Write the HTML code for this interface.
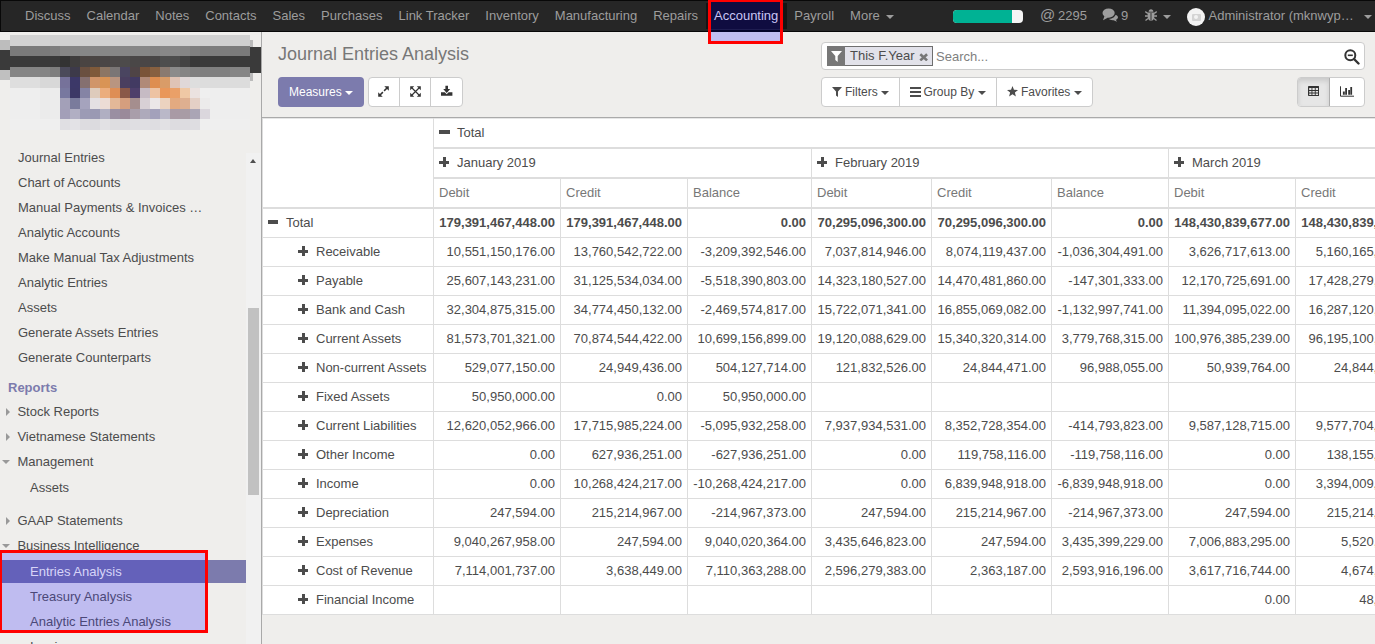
<!DOCTYPE html><html><head><meta charset="utf-8"><style>
*{box-sizing:border-box;margin:0;padding:0}
html,body{width:1375px;height:644px;overflow:hidden;background:#efeeec;font-family:"Liberation Sans", sans-serif;font-size:13px;color:#4c4c4c}
.abs{position:absolute}
.nav{position:absolute;left:0;top:0;width:1377px;height:32px;background:#262626;border:1px solid #080808}
.nav a{position:absolute;top:8px;color:#9d9d9d;font-size:13px;line-height:15px;white-space:nowrap}
.sb{position:absolute;left:0;top:32px;width:262px;height:612px;background:#efeeec;border-right:1px solid #a9a9a9}
.mi{position:absolute;white-space:nowrap;line-height:15px}
.cell{position:absolute;white-space:nowrap;line-height:18px}
.hl{position:absolute;background:#dddddd}
</style></head><body><div class="nav"></div><a style="position:absolute;left:25px;top:8px;color:#9d9d9d;line-height:15px;white-space:nowrap">Discuss</a><a style="position:absolute;left:86.52px;top:8px;color:#9d9d9d;line-height:15px;white-space:nowrap">Calendar</a><a style="position:absolute;left:155.29px;top:8px;color:#9d9d9d;line-height:15px;white-space:nowrap">Notes</a><a style="position:absolute;left:205.26px;top:8px;color:#9d9d9d;line-height:15px;white-space:nowrap">Contacts</a><a style="position:absolute;left:272.57px;top:8px;color:#9d9d9d;line-height:15px;white-space:nowrap">Sales</a><a style="position:absolute;left:321.1px;top:8px;color:#9d9d9d;line-height:15px;white-space:nowrap">Purchases</a><a style="position:absolute;left:398.52px;top:8px;color:#9d9d9d;line-height:15px;white-space:nowrap">Link Tracker</a><a style="position:absolute;left:485.33px;top:8px;color:#9d9d9d;line-height:15px;white-space:nowrap">Inventory</a><a style="position:absolute;left:554.81px;top:8px;color:#9d9d9d;line-height:15px;white-space:nowrap">Manufacturing</a><a style="position:absolute;left:653.2px;top:8px;color:#9d9d9d;line-height:15px;white-space:nowrap">Repairs</a><a style="position:absolute;left:794.33px;top:8px;color:#9d9d9d;line-height:15px;white-space:nowrap">Payroll</a><a style="position:absolute;left:850.08px;top:8px;color:#9d9d9d;line-height:15px;white-space:nowrap">More</a><span style="position:absolute;left:886px;top:15px;width:0;height:0;border-left:4px solid transparent;border-right:4px solid transparent;border-top:4px solid #9d9d9d"></span><div class="abs" style="left:953px;top:10px;width:70px;height:13px;background:#f5f5f5;border-radius:4px;overflow:hidden"><div style="width:59px;height:13px;background:#00b294"></div></div><span class="abs" style="left:1040px;top:6px;color:#9d9d9d;font-size:15px;line-height:18px">@</span><span class="abs" style="left:1058px;top:8px;color:#9d9d9d;line-height:15px">2295</span><svg class="abs" style="left:1102px;top:8px" width="17" height="14" viewBox="0 0 17 14"><path d="M9.5 6.5 C13.5 6 16 7.5 16 9.2 C16 10.4 15 11.3 13.8 11.8 L15 13.8 L11.6 12.3 C9 12.5 6.5 11.4 6.2 9.6Z" fill="#9d9d9d"/><ellipse cx="6.8" cy="5.3" rx="7.2" ry="5.6" fill="#262626"/><ellipse cx="6.6" cy="5.1" rx="6.1" ry="4.6" fill="#9d9d9d"/><path d="M2.5 8 L1 12.2 L6.2 9.6Z" fill="#9d9d9d"/></svg><span class="abs" style="left:1121px;top:8px;color:#9d9d9d;line-height:15px">9</span><svg class="abs" style="left:1145px;top:9px" width="12" height="12" viewBox="0 0 12 12"><path d="M3.6 2.8 C3.6 1.2 4.6 0.2 6 0.2 C7.4 0.2 8.4 1.2 8.4 2.8Z" fill="#9d9d9d"/><path d="M2.6 3.4 H9.4 V7.5 C9.4 10 8 11.8 6 11.8 C4 11.8 2.6 10 2.6 7.5Z" fill="#9d9d9d"/><path d="M6 4V11.5" stroke="#262626" stroke-width="0.9"/><path d="M0.3 2.6 L2.8 4.6 M11.7 2.6 L9.2 4.6 M0 7 H2.8 M12 7 H9.2 M0.5 11.4 L3 9.4 M11.5 11.4 L9 9.4" stroke="#9d9d9d" stroke-width="1.3"/></svg><span style="position:absolute;left:1163px;top:15px;width:0;height:0;border-left:4px solid transparent;border-right:4px solid transparent;border-top:4px solid #9d9d9d"></span><div class="abs" style="left:1187px;top:8px;width:18px;height:18px;border-radius:50%;background:#f3f3f3"><div style="position:absolute;left:4.5px;top:6px;width:9px;height:6.5px;background:#d4d4d4;border-radius:1px"></div><div style="position:absolute;left:7px;top:7.2px;width:4px;height:4px;background:#f3f3f3;border-radius:50%"></div></div><span class="abs" style="left:1208.5px;top:8px;color:#9d9d9d;line-height:15px;white-space:nowrap">Administrator (mknwyp…</span><span style="position:absolute;left:1364px;top:15px;width:0;height:0;border-left:4px solid transparent;border-right:4px solid transparent;border-top:4px solid #9d9d9d"></span><div class="abs" style="left:706px;top:3px;width:81px;height:26px;background:#151515"></div><div class="abs" style="left:708px;top:0;width:75px;height:44px;border:3px solid #ff0000"></div><div class="abs" style="left:711px;top:2px;width:69px;height:27px;background:#0f0c40"></div><div class="abs" style="left:711px;top:29px;width:69px;height:1px;background:#1e1c50"></div><div class="abs" style="left:711px;top:30px;width:69px;height:2px;background:#03022a"></div><div class="abs" style="left:711px;top:32px;width:69px;height:9px;background:#c0bdf0"></div><a class="abs" style="left:714px;top:8px;color:#c9c5f5;line-height:15px">Accounting</a><div class="sb"></div><div style="position:absolute;left:0;top:0;width:262px;height:145px;overflow:hidden"><div style="position:absolute;left:0;top:40px;width:10px;height:10px;background:#bdbdbd"></div><div style="position:absolute;left:0;top:50px;width:10px;height:20px;background:#3a3a3a"></div><div style="position:absolute;left:0;top:70px;width:10px;height:10px;background:#c0c0c0"></div><div style="position:absolute;left:250px;top:40px;width:3px;height:10px;background:#bbbbbb"></div><div style="position:absolute;left:250px;top:71px;width:3px;height:10px;background:#bbbbbb"></div><div style="position:absolute;left:250px;top:47px;width:11px;height:26px;background:#3a3a3a"></div><div style="position:absolute;left:10px;top:35px;width:10px;height:11px;background:#d2d2d2"></div><div style="position:absolute;left:20px;top:35px;width:10px;height:11px;background:#d2d2d2"></div><div style="position:absolute;left:30px;top:35px;width:10px;height:11px;background:#d2d2d2"></div><div style="position:absolute;left:40px;top:35px;width:10px;height:11px;background:#d2d2d2"></div><div style="position:absolute;left:50px;top:35px;width:10px;height:11px;background:#d0d0d0"></div><div style="position:absolute;left:60px;top:35px;width:10px;height:11px;background:#d0d0d0"></div><div style="position:absolute;left:70px;top:35px;width:10px;height:11px;background:#d0d0d0"></div><div style="position:absolute;left:80px;top:35px;width:10px;height:11px;background:#d0d0d0"></div><div style="position:absolute;left:90px;top:35px;width:10px;height:11px;background:#d0d0d0"></div><div style="position:absolute;left:100px;top:35px;width:10px;height:11px;background:#d0d0d0"></div><div style="position:absolute;left:110px;top:35px;width:10px;height:11px;background:#d0d0d0"></div><div style="position:absolute;left:120px;top:35px;width:10px;height:11px;background:#d0d0d0"></div><div style="position:absolute;left:130px;top:35px;width:10px;height:11px;background:#d0d0d0"></div><div style="position:absolute;left:140px;top:35px;width:10px;height:11px;background:#d0d0d0"></div><div style="position:absolute;left:150px;top:35px;width:10px;height:11px;background:#d0d0d0"></div><div style="position:absolute;left:160px;top:35px;width:10px;height:11px;background:#d0d0d0"></div><div style="position:absolute;left:170px;top:35px;width:10px;height:11px;background:#d0d0d0"></div><div style="position:absolute;left:180px;top:35px;width:10px;height:11px;background:#d0d0d0"></div><div style="position:absolute;left:190px;top:35px;width:10px;height:11px;background:#d0d0d0"></div><div style="position:absolute;left:200px;top:35px;width:10px;height:11px;background:#d0d0d0"></div><div style="position:absolute;left:210px;top:35px;width:10px;height:11px;background:#d0d0d0"></div><div style="position:absolute;left:220px;top:35px;width:10px;height:11px;background:#d0d0d0"></div><div style="position:absolute;left:230px;top:35px;width:10px;height:11px;background:#d0d0d0"></div><div style="position:absolute;left:240px;top:35px;width:10px;height:11px;background:#d0d0d0"></div><div style="position:absolute;left:10px;top:46px;width:10px;height:10px;background:#7a7a7a"></div><div style="position:absolute;left:20px;top:46px;width:10px;height:10px;background:#7a7a7a"></div><div style="position:absolute;left:30px;top:46px;width:10px;height:10px;background:#7a7a7a"></div><div style="position:absolute;left:40px;top:46px;width:10px;height:10px;background:#7a7a7a"></div><div style="position:absolute;left:50px;top:46px;width:10px;height:10px;background:#7e7e7e"></div><div style="position:absolute;left:60px;top:46px;width:10px;height:10px;background:#858585"></div><div style="position:absolute;left:70px;top:46px;width:10px;height:10px;background:#858585"></div><div style="position:absolute;left:80px;top:46px;width:10px;height:10px;background:#878787"></div><div style="position:absolute;left:90px;top:46px;width:10px;height:10px;background:#878787"></div><div style="position:absolute;left:100px;top:46px;width:10px;height:10px;background:#878787"></div><div style="position:absolute;left:110px;top:46px;width:10px;height:10px;background:#878787"></div><div style="position:absolute;left:120px;top:46px;width:10px;height:10px;background:#878787"></div><div style="position:absolute;left:130px;top:46px;width:10px;height:10px;background:#878787"></div><div style="position:absolute;left:140px;top:46px;width:10px;height:10px;background:#878787"></div><div style="position:absolute;left:150px;top:46px;width:10px;height:10px;background:#838383"></div><div style="position:absolute;left:160px;top:46px;width:10px;height:10px;background:#888888"></div><div style="position:absolute;left:170px;top:46px;width:10px;height:10px;background:#888888"></div><div style="position:absolute;left:180px;top:46px;width:10px;height:10px;background:#858585"></div><div style="position:absolute;left:190px;top:46px;width:10px;height:10px;background:#7f7f7f"></div><div style="position:absolute;left:200px;top:46px;width:10px;height:10px;background:#7c7c7c"></div><div style="position:absolute;left:210px;top:46px;width:10px;height:10px;background:#7d7d7d"></div><div style="position:absolute;left:220px;top:46px;width:10px;height:10px;background:#7d7d7d"></div><div style="position:absolute;left:230px;top:46px;width:10px;height:10px;background:#7b7b7b"></div><div style="position:absolute;left:240px;top:46px;width:10px;height:10px;background:#7a7a7a"></div><div style="position:absolute;left:10px;top:56px;width:10px;height:11px;background:#3a3a3a"></div><div style="position:absolute;left:20px;top:56px;width:10px;height:11px;background:#3a3a3a"></div><div style="position:absolute;left:30px;top:56px;width:10px;height:11px;background:#3a3a3a"></div><div style="position:absolute;left:40px;top:56px;width:10px;height:11px;background:#3a3a3a"></div><div style="position:absolute;left:50px;top:56px;width:10px;height:11px;background:#3a3a3a"></div><div style="position:absolute;left:60px;top:56px;width:10px;height:11px;background:#333333"></div><div style="position:absolute;left:70px;top:56px;width:10px;height:11px;background:#3f3d3d"></div><div style="position:absolute;left:80px;top:56px;width:10px;height:11px;background:#4a4442"></div><div style="position:absolute;left:90px;top:56px;width:10px;height:11px;background:#4a4543"></div><div style="position:absolute;left:100px;top:56px;width:10px;height:11px;background:#4a4646"></div><div style="position:absolute;left:110px;top:56px;width:10px;height:11px;background:#4c4949"></div><div style="position:absolute;left:120px;top:56px;width:10px;height:11px;background:#4d4b4b"></div><div style="position:absolute;left:130px;top:56px;width:10px;height:11px;background:#4a4747"></div><div style="position:absolute;left:140px;top:56px;width:10px;height:11px;background:#4a4646"></div><div style="position:absolute;left:150px;top:56px;width:10px;height:11px;background:#474545"></div><div style="position:absolute;left:160px;top:56px;width:10px;height:11px;background:#4e4e4e"></div><div style="position:absolute;left:170px;top:56px;width:10px;height:11px;background:#4d4d4d"></div><div style="position:absolute;left:180px;top:56px;width:10px;height:11px;background:#444444"></div><div style="position:absolute;left:190px;top:56px;width:10px;height:11px;background:#383838"></div><div style="position:absolute;left:200px;top:56px;width:10px;height:11px;background:#3a3a3a"></div><div style="position:absolute;left:210px;top:56px;width:10px;height:11px;background:#3a3a3a"></div><div style="position:absolute;left:220px;top:56px;width:10px;height:11px;background:#3a3a3a"></div><div style="position:absolute;left:230px;top:56px;width:10px;height:11px;background:#3a3a3a"></div><div style="position:absolute;left:240px;top:56px;width:10px;height:11px;background:#3a3a3a"></div><div style="position:absolute;left:10px;top:67px;width:10px;height:10px;background:#858585"></div><div style="position:absolute;left:20px;top:67px;width:10px;height:10px;background:#858585"></div><div style="position:absolute;left:30px;top:67px;width:10px;height:10px;background:#858585"></div><div style="position:absolute;left:40px;top:67px;width:10px;height:10px;background:#858585"></div><div style="position:absolute;left:50px;top:67px;width:10px;height:10px;background:#7e7e7e"></div><div style="position:absolute;left:60px;top:67px;width:10px;height:10px;background:#4b4a5a"></div><div style="position:absolute;left:70px;top:67px;width:10px;height:10px;background:#3d3a4a"></div><div style="position:absolute;left:80px;top:67px;width:10px;height:10px;background:#6a5040"></div><div style="position:absolute;left:90px;top:67px;width:10px;height:10px;background:#7f5a3a"></div><div style="position:absolute;left:100px;top:67px;width:10px;height:10px;background:#8c7664"></div><div style="position:absolute;left:110px;top:67px;width:10px;height:10px;background:#7a7676"></div><div style="position:absolute;left:120px;top:67px;width:10px;height:10px;background:#4a4560"></div><div style="position:absolute;left:130px;top:67px;width:10px;height:10px;background:#4f4446"></div><div style="position:absolute;left:140px;top:67px;width:10px;height:10px;background:#7a5438"></div><div style="position:absolute;left:150px;top:67px;width:10px;height:10px;background:#876040"></div><div style="position:absolute;left:160px;top:67px;width:10px;height:10px;background:#8a7a70"></div><div style="position:absolute;left:170px;top:67px;width:10px;height:10px;background:#8b8b8b"></div><div style="position:absolute;left:180px;top:67px;width:10px;height:10px;background:#858585"></div><div style="position:absolute;left:190px;top:67px;width:10px;height:10px;background:#808080"></div><div style="position:absolute;left:200px;top:67px;width:10px;height:10px;background:#7f7f7f"></div><div style="position:absolute;left:210px;top:67px;width:10px;height:10px;background:#808080"></div><div style="position:absolute;left:220px;top:67px;width:10px;height:10px;background:#808080"></div><div style="position:absolute;left:230px;top:67px;width:10px;height:10px;background:#858585"></div><div style="position:absolute;left:240px;top:67px;width:10px;height:10px;background:#858585"></div><div style="position:absolute;left:10px;top:77px;width:10px;height:11px;background:#dedede"></div><div style="position:absolute;left:20px;top:77px;width:10px;height:11px;background:#dedede"></div><div style="position:absolute;left:30px;top:77px;width:10px;height:11px;background:#dedede"></div><div style="position:absolute;left:40px;top:77px;width:10px;height:11px;background:#d8d8d8"></div><div style="position:absolute;left:50px;top:77px;width:10px;height:11px;background:#d8d8d8"></div><div style="position:absolute;left:60px;top:77px;width:10px;height:11px;background:#76729a"></div><div style="position:absolute;left:70px;top:77px;width:10px;height:11px;background:#3c3868"></div><div style="position:absolute;left:80px;top:77px;width:10px;height:11px;background:#857070"></div><div style="position:absolute;left:90px;top:77px;width:10px;height:11px;background:#d0956a"></div><div style="position:absolute;left:100px;top:77px;width:10px;height:11px;background:#d99455"></div><div style="position:absolute;left:110px;top:77px;width:10px;height:11px;background:#b99580"></div><div style="position:absolute;left:120px;top:77px;width:10px;height:11px;background:#4a3f5f"></div><div style="position:absolute;left:130px;top:77px;width:10px;height:11px;background:#423a62"></div><div style="position:absolute;left:140px;top:77px;width:10px;height:11px;background:#b08a78"></div><div style="position:absolute;left:150px;top:77px;width:10px;height:11px;background:#de8e50"></div><div style="position:absolute;left:160px;top:77px;width:10px;height:11px;background:#d99c68"></div><div style="position:absolute;left:170px;top:77px;width:10px;height:11px;background:#dfc3b5"></div><div style="position:absolute;left:180px;top:77px;width:10px;height:11px;background:#e0d8d8"></div><div style="position:absolute;left:190px;top:77px;width:10px;height:11px;background:#dedede"></div><div style="position:absolute;left:200px;top:77px;width:10px;height:11px;background:#dddddd"></div><div style="position:absolute;left:210px;top:77px;width:10px;height:11px;background:#dcdcdc"></div><div style="position:absolute;left:220px;top:77px;width:10px;height:11px;background:#dcdcdc"></div><div style="position:absolute;left:230px;top:77px;width:10px;height:11px;background:#dcdcdc"></div><div style="position:absolute;left:240px;top:77px;width:10px;height:11px;background:#dcdcdc"></div><div style="position:absolute;left:10px;top:88px;width:10px;height:10px;background:#eeeeee"></div><div style="position:absolute;left:20px;top:88px;width:10px;height:10px;background:#eeeeee"></div><div style="position:absolute;left:30px;top:88px;width:10px;height:10px;background:#eeeeee"></div><div style="position:absolute;left:40px;top:88px;width:10px;height:10px;background:#ebebeb"></div><div style="position:absolute;left:50px;top:88px;width:10px;height:10px;background:#ececec"></div><div style="position:absolute;left:60px;top:88px;width:10px;height:10px;background:#78789f"></div><div style="position:absolute;left:70px;top:88px;width:10px;height:10px;background:#3c3866"></div><div style="position:absolute;left:80px;top:88px;width:10px;height:10px;background:#8584a5"></div><div style="position:absolute;left:90px;top:88px;width:10px;height:10px;background:#decbbc"></div><div style="position:absolute;left:100px;top:88px;width:10px;height:10px;background:#ebad7d"></div><div style="position:absolute;left:110px;top:88px;width:10px;height:10px;background:#de8e55"></div><div style="position:absolute;left:120px;top:88px;width:10px;height:10px;background:#8a5848"></div><div style="position:absolute;left:130px;top:88px;width:10px;height:10px;background:#4e3f6a"></div><div style="position:absolute;left:140px;top:88px;width:10px;height:10px;background:#c6bbc4"></div><div style="position:absolute;left:150px;top:88px;width:10px;height:10px;background:#edc3a3"></div><div style="position:absolute;left:160px;top:88px;width:10px;height:10px;background:#e9975a"></div><div style="position:absolute;left:170px;top:88px;width:10px;height:10px;background:#eaa068"></div><div style="position:absolute;left:180px;top:88px;width:10px;height:10px;background:#efc8a5"></div><div style="position:absolute;left:190px;top:88px;width:10px;height:10px;background:#ebe2e0"></div><div style="position:absolute;left:200px;top:88px;width:10px;height:10px;background:#efefef"></div><div style="position:absolute;left:210px;top:88px;width:10px;height:10px;background:#eeeeee"></div><div style="position:absolute;left:220px;top:88px;width:10px;height:10px;background:#eeeeee"></div><div style="position:absolute;left:230px;top:88px;width:10px;height:10px;background:#eeeeee"></div><div style="position:absolute;left:240px;top:88px;width:10px;height:10px;background:#eeeeee"></div><div style="position:absolute;left:10px;top:98px;width:10px;height:11px;background:#eeeeee"></div><div style="position:absolute;left:20px;top:98px;width:10px;height:11px;background:#eeeeee"></div><div style="position:absolute;left:30px;top:98px;width:10px;height:11px;background:#eeeeee"></div><div style="position:absolute;left:40px;top:98px;width:10px;height:11px;background:#ebebeb"></div><div style="position:absolute;left:50px;top:98px;width:10px;height:11px;background:#ececec"></div><div style="position:absolute;left:60px;top:98px;width:10px;height:11px;background:#a3a0b8"></div><div style="position:absolute;left:70px;top:98px;width:10px;height:11px;background:#7a7b9c"></div><div style="position:absolute;left:80px;top:98px;width:10px;height:11px;background:#a5a3bd"></div><div style="position:absolute;left:90px;top:98px;width:10px;height:11px;background:#e4e0e3"></div><div style="position:absolute;left:100px;top:98px;width:10px;height:11px;background:#ecdcd5"></div><div style="position:absolute;left:110px;top:98px;width:10px;height:11px;background:#e3b898"></div><div style="position:absolute;left:120px;top:98px;width:10px;height:11px;background:#d59e7e"></div><div style="position:absolute;left:130px;top:98px;width:10px;height:11px;background:#a58e8e"></div><div style="position:absolute;left:140px;top:98px;width:10px;height:11px;background:#d8d0d5"></div><div style="position:absolute;left:150px;top:98px;width:10px;height:11px;background:#ebe7e8"></div><div style="position:absolute;left:160px;top:98px;width:10px;height:11px;background:#ecd3c0"></div><div style="position:absolute;left:170px;top:98px;width:10px;height:11px;background:#e3aa80"></div><div style="position:absolute;left:180px;top:98px;width:10px;height:11px;background:#deaf90"></div><div style="position:absolute;left:190px;top:98px;width:10px;height:11px;background:#e4d0c6"></div><div style="position:absolute;left:200px;top:98px;width:10px;height:11px;background:#ecebeb"></div><div style="position:absolute;left:210px;top:98px;width:10px;height:11px;background:#eeeeee"></div><div style="position:absolute;left:220px;top:98px;width:10px;height:11px;background:#eeeeee"></div><div style="position:absolute;left:230px;top:98px;width:10px;height:11px;background:#eeeeee"></div><div style="position:absolute;left:240px;top:98px;width:10px;height:11px;background:#eeeeee"></div><div style="position:absolute;left:10px;top:109px;width:10px;height:10px;background:#eeeeee"></div><div style="position:absolute;left:20px;top:109px;width:10px;height:10px;background:#eeeeee"></div><div style="position:absolute;left:30px;top:109px;width:10px;height:10px;background:#eeeeee"></div><div style="position:absolute;left:40px;top:109px;width:10px;height:10px;background:#ebebeb"></div><div style="position:absolute;left:50px;top:109px;width:10px;height:10px;background:#ececec"></div><div style="position:absolute;left:60px;top:109px;width:10px;height:10px;background:#a39fb8"></div><div style="position:absolute;left:70px;top:109px;width:10px;height:10px;background:#b1afc3"></div><div style="position:absolute;left:80px;top:109px;width:10px;height:10px;background:#9c9bb5"></div><div style="position:absolute;left:90px;top:109px;width:10px;height:10px;background:#9a99b3"></div><div style="position:absolute;left:100px;top:109px;width:10px;height:10px;background:#b0afc2"></div><div style="position:absolute;left:110px;top:109px;width:10px;height:10px;background:#9a8fa2"></div><div style="position:absolute;left:120px;top:109px;width:10px;height:10px;background:#9a8a9a"></div><div style="position:absolute;left:130px;top:109px;width:10px;height:10px;background:#a99eaa"></div><div style="position:absolute;left:140px;top:109px;width:10px;height:10px;background:#aeaabb"></div><div style="position:absolute;left:150px;top:109px;width:10px;height:10px;background:#a3a1bb"></div><div style="position:absolute;left:160px;top:109px;width:10px;height:10px;background:#bab8c8"></div><div style="position:absolute;left:170px;top:109px;width:10px;height:10px;background:#a99aa5"></div><div style="position:absolute;left:180px;top:109px;width:10px;height:10px;background:#a89ca5"></div><div style="position:absolute;left:190px;top:109px;width:10px;height:10px;background:#aaa5b5"></div><div style="position:absolute;left:200px;top:109px;width:10px;height:10px;background:#dbd7dd"></div><div style="position:absolute;left:210px;top:109px;width:10px;height:10px;background:#eeeeee"></div><div style="position:absolute;left:220px;top:109px;width:10px;height:10px;background:#eeeeee"></div><div style="position:absolute;left:230px;top:109px;width:10px;height:10px;background:#eeeeee"></div><div style="position:absolute;left:240px;top:109px;width:10px;height:10px;background:#eeeeee"></div><div style="position:absolute;left:10px;top:119px;width:10px;height:11px;background:#efefef"></div><div style="position:absolute;left:20px;top:119px;width:10px;height:11px;background:#efefef"></div><div style="position:absolute;left:30px;top:119px;width:10px;height:11px;background:#efefef"></div><div style="position:absolute;left:40px;top:119px;width:10px;height:11px;background:#efefef"></div><div style="position:absolute;left:50px;top:119px;width:10px;height:11px;background:#efefef"></div><div style="position:absolute;left:60px;top:119px;width:10px;height:11px;background:#e0dfe3"></div><div style="position:absolute;left:70px;top:119px;width:10px;height:11px;background:#e3e2e6"></div><div style="position:absolute;left:80px;top:119px;width:10px;height:11px;background:#dddce0"></div><div style="position:absolute;left:90px;top:119px;width:10px;height:11px;background:#dcdbdf"></div><div style="position:absolute;left:100px;top:119px;width:10px;height:11px;background:#e2e1e4"></div><div style="position:absolute;left:110px;top:119px;width:10px;height:11px;background:#dedde0"></div><div style="position:absolute;left:120px;top:119px;width:10px;height:11px;background:#dddce0"></div><div style="position:absolute;left:130px;top:119px;width:10px;height:11px;background:#dfdee2"></div><div style="position:absolute;left:140px;top:119px;width:10px;height:11px;background:#e0dfe3"></div><div style="position:absolute;left:150px;top:119px;width:10px;height:11px;background:#dedde1"></div><div style="position:absolute;left:160px;top:119px;width:10px;height:11px;background:#e2e1e4"></div><div style="position:absolute;left:170px;top:119px;width:10px;height:11px;background:#dddce0"></div><div style="position:absolute;left:180px;top:119px;width:10px;height:11px;background:#dddce0"></div><div style="position:absolute;left:190px;top:119px;width:10px;height:11px;background:#dedde1"></div><div style="position:absolute;left:200px;top:119px;width:10px;height:11px;background:#efefef"></div><div style="position:absolute;left:210px;top:119px;width:10px;height:11px;background:#efefef"></div><div style="position:absolute;left:220px;top:119px;width:10px;height:11px;background:#efefef"></div><div style="position:absolute;left:230px;top:119px;width:10px;height:11px;background:#efefef"></div><div style="position:absolute;left:240px;top:119px;width:10px;height:11px;background:#efefef"></div></div><div class="abs" style="left:246px;top:153px;width:15px;height:491px;background:#f1f1f1"></div><div class="abs" style="left:248px;top:308px;width:11px;height:187px;background:#c1c1c1"></div><span class="abs" style="left:249.6px;top:158.6px;width:0;height:0;border-left:3.8px solid transparent;border-right:3.8px solid transparent;border-bottom:4px solid #505050"></span><div class="mi" style="left:18px;top:150px">Journal Entries</div><div class="mi" style="left:18px;top:175px">Chart of Accounts</div><div class="mi" style="left:18px;top:200px">Manual Payments &amp; Invoices …</div><div class="mi" style="left:18px;top:225px">Analytic Accounts</div><div class="mi" style="left:18px;top:250px">Make Manual Tax Adjustments</div><div class="mi" style="left:18px;top:275px">Analytic Entries</div><div class="mi" style="left:18px;top:300px">Assets</div><div class="mi" style="left:18px;top:325px">Generate Assets Entries</div><div class="mi" style="left:18px;top:350px">Generate Counterparts</div><div class="mi" style="left:17.4px;top:404px">Stock Reports</div><div class="mi" style="left:17.4px;top:429px">Vietnamese Statements</div><div class="mi" style="left:17.4px;top:454px">Management</div><div class="mi" style="left:30px;top:480px">Assets</div><div class="mi" style="left:17.4px;top:513px">GAAP Statements</div><div class="mi" style="left:17.4px;top:538px">Business Intelligence</div><div class="mi" style="left:30px;top:589px">Treasury Analysis</div><div class="mi" style="left:30px;top:614px">Analytic Entries Analysis</div><div class="mi" style="left:30px;top:639px">Invoices</div><div class="mi" style="left:8px;top:380px;color:#7c7bad;font-weight:bold">Reports</div><span class="abs" style="left:6px;top:408px;width:0;height:0;border-top:4px solid transparent;border-bottom:4px solid transparent;border-left:4px solid #999"></span><span class="abs" style="left:6px;top:433px;width:0;height:0;border-top:4px solid transparent;border-bottom:4px solid transparent;border-left:4px solid #999"></span><span class="abs" style="left:2px;top:460px;width:0;height:0;border-left:4px solid transparent;border-right:4px solid transparent;border-top:4px solid #999"></span><span class="abs" style="left:6px;top:517px;width:0;height:0;border-top:4px solid transparent;border-bottom:4px solid transparent;border-left:4px solid #999"></span><span class="abs" style="left:2px;top:544px;width:0;height:0;border-left:4px solid transparent;border-right:4px solid transparent;border-top:4px solid #999"></span><div class="abs" style="left:0;top:560px;width:246px;height:23px;background:#7c7bad"></div><div class="abs" style="left:-1px;top:550px;width:209px;height:83px;border:3px solid #ff0000"></div><div class="abs" style="left:2px;top:553px;width:203px;height:77px;background:#bfbcf0"></div><div class="abs" style="left:2px;top:560px;width:203px;height:23px;background:#6461ba"></div><div class="mi" style="left:30px;top:564px;color:#d7d5f8">Entries Analysis</div><div class="mi" style="left:30px;top:589px;color:#4b4878">Treasury Analysis</div><div class="mi" style="left:30px;top:614px;color:#4b4878">Analytic Entries Analysis</div><div class="abs" style="left:278px;top:44px;font-size:18px;line-height:20px;color:#777">Journal Entries Analysis</div><div class="abs" style="left:278px;top:77px;width:86px;height:30px;background:#7c7bad;border-radius:4px"></div><span class="abs" style="left:289px;top:85px;color:#fff;line-height:15px;font-size:12px">Measures</span><span style="position:absolute;left:345px;top:91px;width:0;height:0;border-left:4px solid transparent;border-right:4px solid transparent;border-top:4px solid #ffffff"></span><div class="abs" style="left:368px;top:77px;width:95px;height:30px;background:#fff;border:1px solid #ccc;border-radius:4px"></div><div class="abs" style="left:399px;top:77px;width:1px;height:30px;background:#ccc"></div><div class="abs" style="left:430px;top:77px;width:1px;height:30px;background:#ccc"></div><svg class="abs" style="left:378px;top:86px" width="11" height="11" viewBox="0 0 11 11"><path d="M6.3 0.2H10.8V4.7Z M0.2 6.3V10.8H4.7Z" fill="#333"/><path d="M9 2L6.1 4.9M2 9L4.9 6.1" stroke="#333" stroke-width="1.5"/></svg><svg class="abs" style="left:410px;top:86px" width="11" height="11" viewBox="0 0 11 11"><path d="M0.2 0.2H4.2L0.2 4.2Z M10.8 0.2H6.8L10.8 4.2Z M0.2 10.8H4.2L0.2 6.8Z M10.8 10.8H6.8L10.8 6.8Z" fill="#333"/><path d="M2 2L9 9M9 2L2 9" stroke="#333" stroke-width="1.2"/></svg><svg class="abs" style="left:441px;top:85px" width="12" height="11" viewBox="0 0 12 11"><path d="M4.4 0.8H7V4H9.2L5.7 8L2.2 4H4.4Z" fill="#333"/><path d="M0 7.2H3.8L5.7 9.2L7.6 7.2H11.4V10.8H0Z" fill="#333"/></svg><div class="abs" style="left:821px;top:42px;width:544px;height:28px;background:#fff;border:1px solid #ccc;border-radius:4px"></div><div class="abs" style="left:827px;top:46px;width:106px;height:20px;background:#e2e2ea;border:1px solid #6f6f6f"></div><div class="abs" style="left:827px;top:46px;width:18px;height:20px;background:#777"></div><svg class="abs" style="left:831px;top:51px" width="11" height="11" viewBox="0 0 11 11"><path d="M0 0H11L6.7 5V11L4.3 9V5Z" fill="#fff"/></svg><span class="abs" style="left:850px;top:48px;line-height:15px;color:#4c4c4c">This F.Year</span><svg class="abs" style="left:918.8px;top:52.5px" width="9.4" height="8.6" viewBox="0 0 9.4 8.6"><path d="M1.3 1.2L8.1 7.4M8.1 1.2L1.3 7.4" stroke="#777" stroke-width="2.6"/></svg><span class="abs" style="left:936px;top:49px;line-height:15px;color:#808080">Search...</span><svg class="abs" style="left:1344px;top:49px" width="16" height="16" viewBox="0 0 16 16"><circle cx="6.3" cy="6.3" r="5" fill="none" stroke="#333" stroke-width="2"/><path d="M3.8 6.3H8.8" stroke="#333" stroke-width="1.6"/><path d="M10 10L14.5 14.5" stroke="#333" stroke-width="2.4" stroke-linecap="round"/></svg><div class="abs" style="left:821px;top:77px;width:272px;height:30px;background:#fff;border:1px solid #ccc;border-radius:4px"></div><div class="abs" style="left:899px;top:77px;width:1px;height:30px;background:#ccc"></div><div class="abs" style="left:996px;top:77px;width:1px;height:30px;background:#ccc"></div><svg class="abs" style="left:832px;top:87px" width="10" height="10" viewBox="0 0 10 10"><path d="M0 0H10L6 4.5V10L4 8.5V4.5Z" fill="#4c4c4c"/></svg><span class="abs" style="left:845px;top:85px;line-height:15px;font-size:12px">Filters</span><svg class="abs" style="left:910px;top:87px" width="11" height="10" viewBox="0 0 11 10"><path d="M0 1H11M0 5H11M0 9H11" stroke="#4c4c4c" stroke-width="2"/></svg><span class="abs" style="left:923.5px;top:85px;line-height:15px;font-size:12px">Group By</span><svg class="abs" style="left:1007px;top:86px" width="11" height="11" viewBox="0 0 12 12"><path d="M6 0L7.6 4.1L12 4.4L8.6 7.2L9.7 11.5L6 9.1L2.3 11.5L3.4 7.2L0 4.4L4.4 4.1Z" fill="#4c4c4c"/></svg><span class="abs" style="left:1021px;top:85px;line-height:15px;font-size:12px">Favorites</span><span style="position:absolute;left:881px;top:91px;width:0;height:0;border-left:4px solid transparent;border-right:4px solid transparent;border-top:4px solid #4c4c4c"></span><span style="position:absolute;left:978px;top:91px;width:0;height:0;border-left:4px solid transparent;border-right:4px solid transparent;border-top:4px solid #4c4c4c"></span><span style="position:absolute;left:1074px;top:91px;width:0;height:0;border-left:4px solid transparent;border-right:4px solid transparent;border-top:4px solid #4c4c4c"></span><div class="abs" style="left:1297px;top:77px;width:68px;height:30px;background:#fff;border:1px solid #ccc;border-radius:4px;overflow:hidden"><div style="position:absolute;left:0;top:0;width:32px;height:28px;background:#e6e6e6;border-right:1px solid #adadad;box-shadow:inset 0 3px 5px rgba(0,0,0,.125)"></div></div><svg class="abs" style="left:1308px;top:86px" width="11.2" height="10" viewBox="0 0 11.2 10"><rect x="0" y="0" width="11.2" height="10" rx="0.8" fill="#333"/><path d="M1.2 2.1H3.5V4H1.2Z M4.4 2.1H6.8V4H4.4Z M7.7 2.1H10V4H7.7Z M1.2 4.9H3.5V6.6H1.2Z M4.4 4.9H6.8V6.6H4.4Z M7.7 4.9H10V6.6H7.7Z M1.2 7.5H3.5V8.9H1.2Z M4.4 7.5H6.8V8.9H4.4Z M7.7 7.5H10V8.9H7.7Z" fill="#e6e6e6"/></svg><svg class="abs" style="left:1340px;top:86px" width="14" height="11" viewBox="0 0 14 11"><path d="M0.5 0.3V10.2H14" fill="none" stroke="#333" stroke-width="1"/><path d="M2.9 5.6H4.8V8.8H2.9Z M5.2 2.1H7V8.8H5.2Z M8.2 4.1H10V8.8H8.2Z M10.3 1.1H12.1V8.8H10.3Z" fill="#333"/></svg><div class="abs" style="left:262px;top:117px;width:1113px;height:1px;background:#aaa"></div><div class="abs" style="left:262px;top:118px;width:1113px;height:496px;background:#fff"></div><div class="abs" style="left:263px;top:118px;width:1112px;height:1px;background:#e6e6e6"></div><div class="hl" style="left:262px;top:237px;width:1113px;height:1px"></div><div class="hl" style="left:262px;top:266px;width:1113px;height:1px"></div><div class="hl" style="left:262px;top:295px;width:1113px;height:1px"></div><div class="hl" style="left:262px;top:324px;width:1113px;height:1px"></div><div class="hl" style="left:262px;top:353px;width:1113px;height:1px"></div><div class="hl" style="left:262px;top:382px;width:1113px;height:1px"></div><div class="hl" style="left:262px;top:411px;width:1113px;height:1px"></div><div class="hl" style="left:262px;top:440px;width:1113px;height:1px"></div><div class="hl" style="left:262px;top:469px;width:1113px;height:1px"></div><div class="hl" style="left:262px;top:498px;width:1113px;height:1px"></div><div class="hl" style="left:262px;top:527px;width:1113px;height:1px"></div><div class="hl" style="left:262px;top:556px;width:1113px;height:1px"></div><div class="hl" style="left:262px;top:585px;width:1113px;height:1px"></div><div class="hl" style="left:262px;top:614px;width:1113px;height:1px"></div><div class="hl" style="left:433px;top:147px;width:942px;height:2px"></div><div class="hl" style="left:433px;top:177px;width:942px;height:2px"></div><div class="hl" style="left:262px;top:207px;width:1113px;height:2px"></div><div class="hl" style="left:262px;top:118px;width:1px;height:496px"></div><div class="hl" style="left:433px;top:118px;width:1px;height:496px"></div><div class="hl" style="left:811px;top:147px;width:1px;height:467px"></div><div class="hl" style="left:1168px;top:147px;width:1px;height:467px"></div><div class="hl" style="left:560px;top:177px;width:1px;height:437px"></div><div class="hl" style="left:687px;top:177px;width:1px;height:437px"></div><div class="hl" style="left:931px;top:177px;width:1px;height:437px"></div><div class="hl" style="left:1051px;top:177px;width:1px;height:437px"></div><div class="hl" style="left:1295px;top:177px;width:1px;height:437px"></div><span class="abs" style="left:439px;top:130.2px;width:10.5px;height:3.7px;background:#4c4c4c"></span><span class="cell" style="left:457px;top:124px">Total</span><span class="abs" style="left:439px;top:157px;width:10px;height:10px"><span style="position:absolute;left:0;top:3.5px;width:10px;height:3px;background:#4c4c4c"></span><span style="position:absolute;left:3.5px;top:0;width:3px;height:10px;background:#4c4c4c"></span></span><span class="cell" style="left:457px;top:154px">January 2019</span><span class="abs" style="left:817px;top:157px;width:10px;height:10px"><span style="position:absolute;left:0;top:3.5px;width:10px;height:3px;background:#4c4c4c"></span><span style="position:absolute;left:3.5px;top:0;width:3px;height:10px;background:#4c4c4c"></span></span><span class="cell" style="left:835px;top:154px">February 2019</span><span class="abs" style="left:1174px;top:157px;width:10px;height:10px"><span style="position:absolute;left:0;top:3.5px;width:10px;height:3px;background:#4c4c4c"></span><span style="position:absolute;left:3.5px;top:0;width:3px;height:10px;background:#4c4c4c"></span></span><span class="cell" style="left:1192px;top:154px">March 2019</span><span class="cell" style="left:439px;top:184px;color:#777">Debit</span><span class="cell" style="left:566px;top:184px;color:#777">Credit</span><span class="cell" style="left:693px;top:184px;color:#777">Balance</span><span class="cell" style="left:817px;top:184px;color:#777">Debit</span><span class="cell" style="left:937px;top:184px;color:#777">Credit</span><span class="cell" style="left:1057px;top:184px;color:#777">Balance</span><span class="cell" style="left:1174px;top:184px;color:#777">Debit</span><span class="cell" style="left:1301px;top:184px;color:#777">Credit</span><span class="abs" style="left:267.6px;top:220.2px;width:10.5px;height:3.7px;background:#4c4c4c"></span><span class="cell" style="left:286px;top:214px">Total</span><span class="cell" style="right:820px;top:214px;font-weight:bold;">179,391,467,448.00</span><span class="cell" style="right:693px;top:214px;font-weight:bold;">179,391,467,448.00</span><span class="cell" style="right:569px;top:214px;font-weight:bold;">0.00</span><span class="cell" style="right:449px;top:214px;font-weight:bold;">70,295,096,300.00</span><span class="cell" style="right:329px;top:214px;font-weight:bold;">70,295,096,300.00</span><span class="cell" style="right:212px;top:214px;font-weight:bold;">0.00</span><span class="cell" style="right:85px;top:214px;font-weight:bold;">148,430,839,677.00</span><span class="cell" style="right:-42px;top:214px;font-weight:bold;">148,430,839,677.00</span><span class="abs" style="left:298px;top:246px;width:10px;height:10px"><span style="position:absolute;left:0;top:3.5px;width:10px;height:3px;background:#4c4c4c"></span><span style="position:absolute;left:3.5px;top:0;width:3px;height:10px;background:#4c4c4c"></span></span><span class="cell" style="left:316px;top:243px">Receivable</span><span class="cell" style="right:820px;top:243px;">10,551,150,176.00</span><span class="cell" style="right:693px;top:243px;">13,760,542,722.00</span><span class="cell" style="right:569px;top:243px;">-3,209,392,546.00</span><span class="cell" style="right:449px;top:243px;">7,037,814,946.00</span><span class="cell" style="right:329px;top:243px;">8,074,119,437.00</span><span class="cell" style="right:212px;top:243px;">-1,036,304,491.00</span><span class="cell" style="right:85px;top:243px;">3,626,717,613.00</span><span class="cell" style="right:-42px;top:243px;">5,160,165,000.00</span><span class="abs" style="left:298px;top:275px;width:10px;height:10px"><span style="position:absolute;left:0;top:3.5px;width:10px;height:3px;background:#4c4c4c"></span><span style="position:absolute;left:3.5px;top:0;width:3px;height:10px;background:#4c4c4c"></span></span><span class="cell" style="left:316px;top:272px">Payable</span><span class="cell" style="right:820px;top:272px;">25,607,143,231.00</span><span class="cell" style="right:693px;top:272px;">31,125,534,034.00</span><span class="cell" style="right:569px;top:272px;">-5,518,390,803.00</span><span class="cell" style="right:449px;top:272px;">14,323,180,527.00</span><span class="cell" style="right:329px;top:272px;">14,470,481,860.00</span><span class="cell" style="right:212px;top:272px;">-147,301,333.00</span><span class="cell" style="right:85px;top:272px;">12,170,725,691.00</span><span class="cell" style="right:-42px;top:272px;">17,428,279,000.00</span><span class="abs" style="left:298px;top:304px;width:10px;height:10px"><span style="position:absolute;left:0;top:3.5px;width:10px;height:3px;background:#4c4c4c"></span><span style="position:absolute;left:3.5px;top:0;width:3px;height:10px;background:#4c4c4c"></span></span><span class="cell" style="left:316px;top:301px">Bank and Cash</span><span class="cell" style="right:820px;top:301px;">32,304,875,315.00</span><span class="cell" style="right:693px;top:301px;">34,774,450,132.00</span><span class="cell" style="right:569px;top:301px;">-2,469,574,817.00</span><span class="cell" style="right:449px;top:301px;">15,722,071,341.00</span><span class="cell" style="right:329px;top:301px;">16,855,069,082.00</span><span class="cell" style="right:212px;top:301px;">-1,132,997,741.00</span><span class="cell" style="right:85px;top:301px;">11,394,095,022.00</span><span class="cell" style="right:-42px;top:301px;">16,287,120,000.00</span><span class="abs" style="left:298px;top:333px;width:10px;height:10px"><span style="position:absolute;left:0;top:3.5px;width:10px;height:3px;background:#4c4c4c"></span><span style="position:absolute;left:3.5px;top:0;width:3px;height:10px;background:#4c4c4c"></span></span><span class="cell" style="left:316px;top:330px">Current Assets</span><span class="cell" style="right:820px;top:330px;">81,573,701,321.00</span><span class="cell" style="right:693px;top:330px;">70,874,544,422.00</span><span class="cell" style="right:569px;top:330px;">10,699,156,899.00</span><span class="cell" style="right:449px;top:330px;">19,120,088,629.00</span><span class="cell" style="right:329px;top:330px;">15,340,320,314.00</span><span class="cell" style="right:212px;top:330px;">3,779,768,315.00</span><span class="cell" style="right:85px;top:330px;">100,976,385,239.00</span><span class="cell" style="right:-42px;top:330px;">96,195,100,000.00</span><span class="abs" style="left:298px;top:362px;width:10px;height:10px"><span style="position:absolute;left:0;top:3.5px;width:10px;height:3px;background:#4c4c4c"></span><span style="position:absolute;left:3.5px;top:0;width:3px;height:10px;background:#4c4c4c"></span></span><span class="cell" style="left:316px;top:359px">Non-current Assets</span><span class="cell" style="right:820px;top:359px;">529,077,150.00</span><span class="cell" style="right:693px;top:359px;">24,949,436.00</span><span class="cell" style="right:569px;top:359px;">504,127,714.00</span><span class="cell" style="right:449px;top:359px;">121,832,526.00</span><span class="cell" style="right:329px;top:359px;">24,844,471.00</span><span class="cell" style="right:212px;top:359px;">96,988,055.00</span><span class="cell" style="right:85px;top:359px;">50,939,764.00</span><span class="cell" style="right:-42px;top:359px;">24,844,471.00</span><span class="abs" style="left:298px;top:391px;width:10px;height:10px"><span style="position:absolute;left:0;top:3.5px;width:10px;height:3px;background:#4c4c4c"></span><span style="position:absolute;left:3.5px;top:0;width:3px;height:10px;background:#4c4c4c"></span></span><span class="cell" style="left:316px;top:388px">Fixed Assets</span><span class="cell" style="right:820px;top:388px;">50,950,000.00</span><span class="cell" style="right:693px;top:388px;">0.00</span><span class="cell" style="right:569px;top:388px;">50,950,000.00</span><span class="cell" style="right:449px;top:388px;"></span><span class="cell" style="right:329px;top:388px;"></span><span class="cell" style="right:212px;top:388px;"></span><span class="cell" style="right:85px;top:388px;"></span><span class="cell" style="right:-42px;top:388px;"></span><span class="abs" style="left:298px;top:420px;width:10px;height:10px"><span style="position:absolute;left:0;top:3.5px;width:10px;height:3px;background:#4c4c4c"></span><span style="position:absolute;left:3.5px;top:0;width:3px;height:10px;background:#4c4c4c"></span></span><span class="cell" style="left:316px;top:417px">Current Liabilities</span><span class="cell" style="right:820px;top:417px;">12,620,052,966.00</span><span class="cell" style="right:693px;top:417px;">17,715,985,224.00</span><span class="cell" style="right:569px;top:417px;">-5,095,932,258.00</span><span class="cell" style="right:449px;top:417px;">7,937,934,531.00</span><span class="cell" style="right:329px;top:417px;">8,352,728,354.00</span><span class="cell" style="right:212px;top:417px;">-414,793,823.00</span><span class="cell" style="right:85px;top:417px;">9,587,128,715.00</span><span class="cell" style="right:-42px;top:417px;">9,577,704,000.00</span><span class="abs" style="left:298px;top:449px;width:10px;height:10px"><span style="position:absolute;left:0;top:3.5px;width:10px;height:3px;background:#4c4c4c"></span><span style="position:absolute;left:3.5px;top:0;width:3px;height:10px;background:#4c4c4c"></span></span><span class="cell" style="left:316px;top:446px">Other Income</span><span class="cell" style="right:820px;top:446px;">0.00</span><span class="cell" style="right:693px;top:446px;">627,936,251.00</span><span class="cell" style="right:569px;top:446px;">-627,936,251.00</span><span class="cell" style="right:449px;top:446px;">0.00</span><span class="cell" style="right:329px;top:446px;">119,758,116.00</span><span class="cell" style="right:212px;top:446px;">-119,758,116.00</span><span class="cell" style="right:85px;top:446px;">0.00</span><span class="cell" style="right:-42px;top:446px;">138,155,000.00</span><span class="abs" style="left:298px;top:478px;width:10px;height:10px"><span style="position:absolute;left:0;top:3.5px;width:10px;height:3px;background:#4c4c4c"></span><span style="position:absolute;left:3.5px;top:0;width:3px;height:10px;background:#4c4c4c"></span></span><span class="cell" style="left:316px;top:475px">Income</span><span class="cell" style="right:820px;top:475px;">0.00</span><span class="cell" style="right:693px;top:475px;">10,268,424,217.00</span><span class="cell" style="right:569px;top:475px;">-10,268,424,217.00</span><span class="cell" style="right:449px;top:475px;">0.00</span><span class="cell" style="right:329px;top:475px;">6,839,948,918.00</span><span class="cell" style="right:212px;top:475px;">-6,839,948,918.00</span><span class="cell" style="right:85px;top:475px;">0.00</span><span class="cell" style="right:-42px;top:475px;">3,394,009,000.00</span><span class="abs" style="left:298px;top:507px;width:10px;height:10px"><span style="position:absolute;left:0;top:3.5px;width:10px;height:3px;background:#4c4c4c"></span><span style="position:absolute;left:3.5px;top:0;width:3px;height:10px;background:#4c4c4c"></span></span><span class="cell" style="left:316px;top:504px">Depreciation</span><span class="cell" style="right:820px;top:504px;">247,594.00</span><span class="cell" style="right:693px;top:504px;">215,214,967.00</span><span class="cell" style="right:569px;top:504px;">-214,967,373.00</span><span class="cell" style="right:449px;top:504px;">247,594.00</span><span class="cell" style="right:329px;top:504px;">215,214,967.00</span><span class="cell" style="right:212px;top:504px;">-214,967,373.00</span><span class="cell" style="right:85px;top:504px;">247,594.00</span><span class="cell" style="right:-42px;top:504px;">215,214,967.00</span><span class="abs" style="left:298px;top:536px;width:10px;height:10px"><span style="position:absolute;left:0;top:3.5px;width:10px;height:3px;background:#4c4c4c"></span><span style="position:absolute;left:3.5px;top:0;width:3px;height:10px;background:#4c4c4c"></span></span><span class="cell" style="left:316px;top:533px">Expenses</span><span class="cell" style="right:820px;top:533px;">9,040,267,958.00</span><span class="cell" style="right:693px;top:533px;">247,594.00</span><span class="cell" style="right:569px;top:533px;">9,040,020,364.00</span><span class="cell" style="right:449px;top:533px;">3,435,646,823.00</span><span class="cell" style="right:329px;top:533px;">247,594.00</span><span class="cell" style="right:212px;top:533px;">3,435,399,229.00</span><span class="cell" style="right:85px;top:533px;">7,006,883,295.00</span><span class="cell" style="right:-42px;top:533px;">5,520,000.00</span><span class="abs" style="left:298px;top:565px;width:10px;height:10px"><span style="position:absolute;left:0;top:3.5px;width:10px;height:3px;background:#4c4c4c"></span><span style="position:absolute;left:3.5px;top:0;width:3px;height:10px;background:#4c4c4c"></span></span><span class="cell" style="left:316px;top:562px">Cost of Revenue</span><span class="cell" style="right:820px;top:562px;">7,114,001,737.00</span><span class="cell" style="right:693px;top:562px;">3,638,449.00</span><span class="cell" style="right:569px;top:562px;">7,110,363,288.00</span><span class="cell" style="right:449px;top:562px;">2,596,279,383.00</span><span class="cell" style="right:329px;top:562px;">2,363,187.00</span><span class="cell" style="right:212px;top:562px;">2,593,916,196.00</span><span class="cell" style="right:85px;top:562px;">3,617,716,744.00</span><span class="cell" style="right:-42px;top:562px;">4,674,000.00</span><span class="abs" style="left:298px;top:594px;width:10px;height:10px"><span style="position:absolute;left:0;top:3.5px;width:10px;height:3px;background:#4c4c4c"></span><span style="position:absolute;left:3.5px;top:0;width:3px;height:10px;background:#4c4c4c"></span></span><span class="cell" style="left:316px;top:591px">Financial Income</span><span class="cell" style="right:820px;top:591px;"></span><span class="cell" style="right:693px;top:591px;"></span><span class="cell" style="right:569px;top:591px;"></span><span class="cell" style="right:449px;top:591px;"></span><span class="cell" style="right:329px;top:591px;"></span><span class="cell" style="right:212px;top:591px;"></span><span class="cell" style="right:85px;top:591px;">0.00</span><span class="cell" style="right:-42px;top:591px;">48,000.00</span></body></html>
